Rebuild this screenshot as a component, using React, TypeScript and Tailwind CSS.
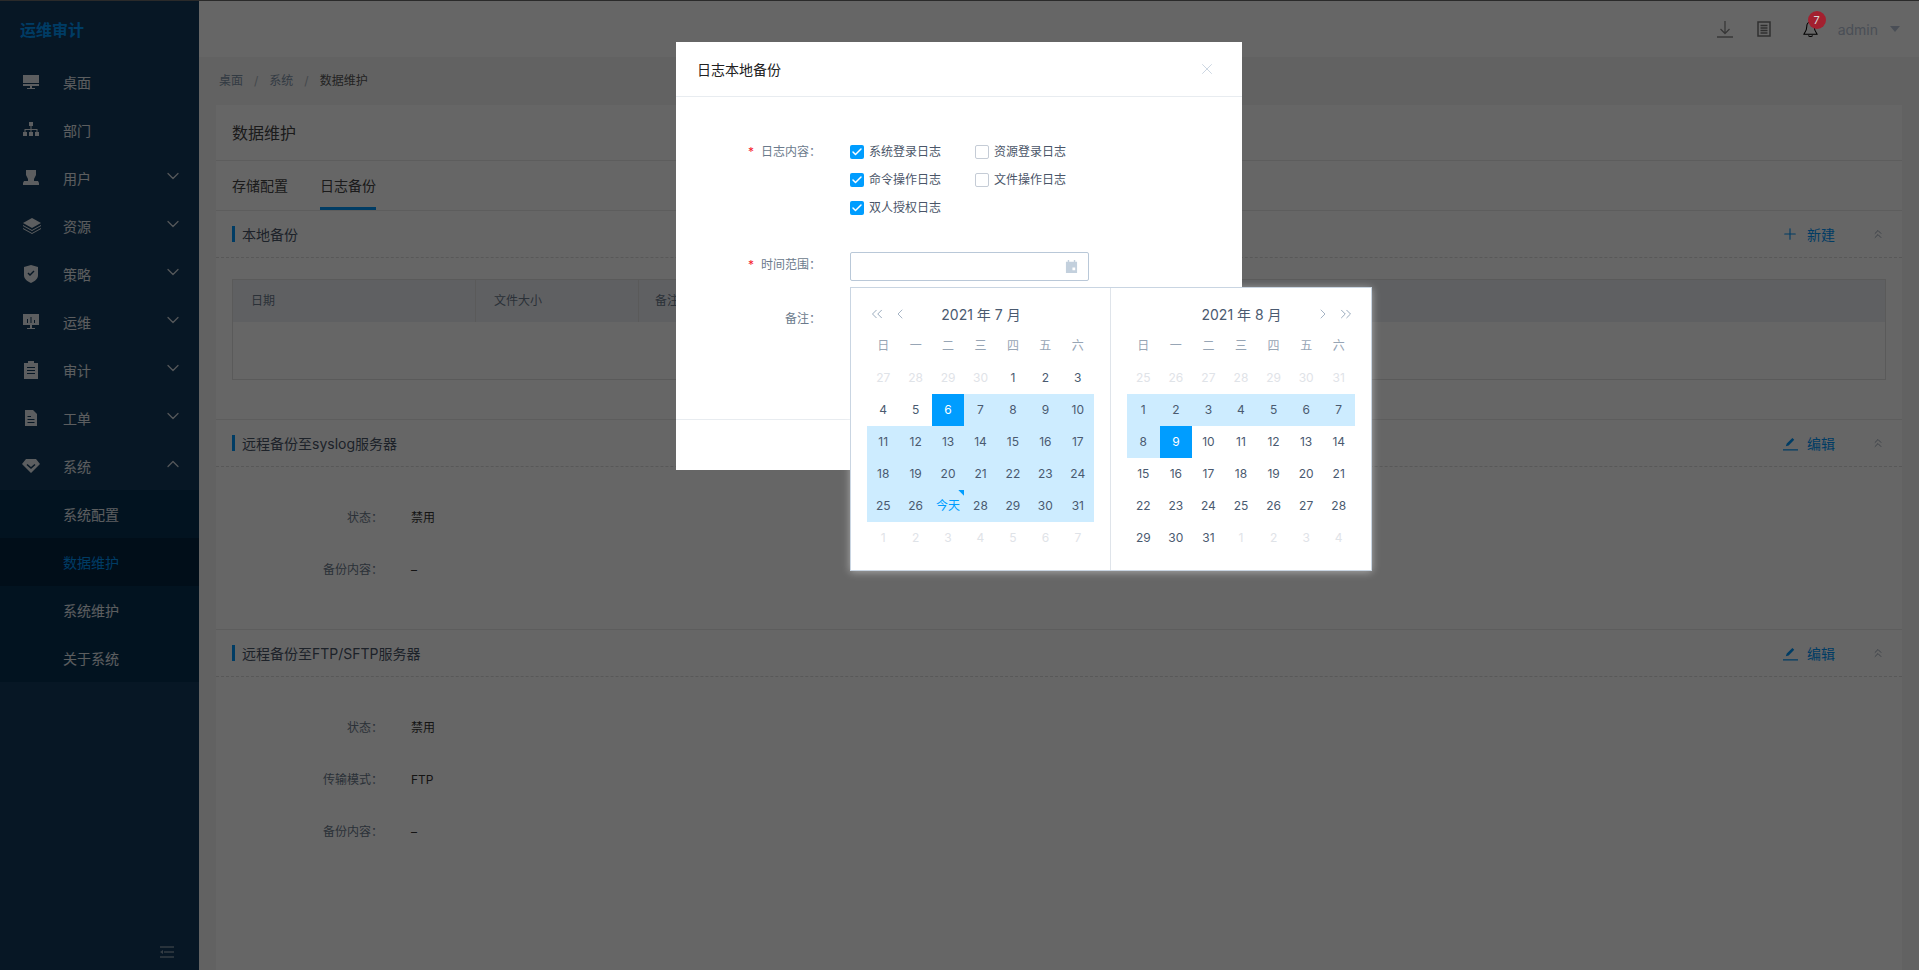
import React from "react";
import { ChevronDown, ChevronUp, ChevronLeft, ChevronRight, ChevronsLeft, ChevronsRight, ChevronsUp, Plus, X, Check } from "lucide-react";

const ICON = "w-[18px] h-[18px] fill-[#fff]/90";
const Desk = () => (<svg viewBox="0 0 18 18" className={ICON}><path d="M1 2h16v8H1zM1 11h16v2H1zM8 13h2v2H8zM5 15h8v1H5z" /></svg>);
const Org = () => (<svg viewBox="0 0 18 18" className={ICON}><path d="M7 1h4v4H7zM8.5 5h1v3h-1zM2.5 8h13v1h-13zM2.5 8h1v3h-1zM8.500 8h1v3h-1zM14.500 8h1v3h-1zM1 11h4v4H1zM7 11h4v4H7zM13 11h4v4h-4z" /></svg>);
const User = () => (<svg viewBox="0 0 18 18" className={ICON}><path d="M4 1h10v5l-2 4v2h4l1 2v2H1v-2l1-2h4v-2L4 6z" /></svg>);
const Layers = () => (<svg viewBox="0 0 20 18" className="w-5 h-[18px] fill-[#fff]/90"><path d="M10 1l9 5-9 5-9-5z" /><path d="M1 8l9 5 9-5v1l-9 5-9-5zM1 11l9 5 9-5v1l-9 5-9-5z" /></svg>);
const Shield = () => (<svg viewBox="0 0 18 18" className={ICON}><path fillRule="evenodd" d="M9 0l7 2v8c0 4-3 6-7 8-4-2-7-4-7-8V2zM5.500 8.500l1-1L8 9l3.500-3.500 1 1L8 11z" /></svg>);
const Ops = () => (<svg viewBox="0 0 18 18" className={ICON}><path fillRule="evenodd" d="M1 1h16v11H1zM5 6h1v4H5zM8.500 4h1v6h-1zM12 7h1v3h-1z" /><path d="M8 12h2v3H8zM5 15h8v1H5z" /></svg>);
const Clip = () => (<svg viewBox="0 0 18 18" className={ICON}><path fillRule="evenodd" d="M6 2V0h6v2h4v16H2V2zM5 6v1h8V6zM5 9v1h8V9zM5 12v1h8v-1z" /></svg>);
const Doc = () => (<svg viewBox="0 0 18 18" className={ICON}><path fillRule="evenodd" d="M3 1h8l4 4v12H3zM5.500 7v1H9V7zM5.500 10v1h7v-1zM5.500 13v1h7v-1z" /></svg>);
const Gem = () => (<svg viewBox="0 0 18 18" className={ICON}><path fillRule="evenodd" d="M4 2h10l4 5-9 9-9-9zM5.500 7l-1 1L9 12l4.500-4-1-1L9 10z" /></svg>);

function MenuItem({ icon, label, arrow }: { icon: React.ReactNode; label: string; arrow?: "down" | "up" }) {
  return (
    <div className="h-12 flex items-center relative">
      <div className="w-[63px] pl-[22px] flex items-center">{icon}</div>
      <span className="text-[14px] text-[#fff]/90 flex-1">{label}</span>
      {arrow === "down" && <ChevronDown className="w-5 h-5 text-[#fff]/80 mr-4 mb-1" strokeWidth={1.5} />}
      {arrow === "up" && <ChevronUp className="w-5 h-5 text-[#fff]/80 mr-4 mb-1" strokeWidth={1.5} />}
    </div>
  );
}

function Sidebar() {
  return (
    <aside className="w-[199px] shrink-0 bg-[#123a5c] flex flex-col">
      <div className="h-[57px] flex items-center pl-5 text-[16px] font-bold text-[#0096fa]">运维审计</div>
      <MenuItem icon={<Desk />} label="桌面" />
      <MenuItem icon={<Org />} label="部门" />
      <MenuItem icon={<User />} label="用户" arrow="down" />
      <MenuItem icon={<Layers />} label="资源" arrow="down" />
      <MenuItem icon={<Shield />} label="策略" arrow="down" />
      <MenuItem icon={<Ops />} label="运维" arrow="down" />
      <MenuItem icon={<Clip />} label="审计" arrow="down" />
      <MenuItem icon={<Doc />} label="工单" arrow="down" />
      <MenuItem icon={<Gem />} label="系统" arrow="up" />
      <div className="bg-[#053052]">
        <div className="h-12 flex items-center pl-[63px] text-[14px] text-[#fff]/90">系统配置</div>
        <div className="h-12 flex items-center pl-[63px] text-[14px] text-[#0096fa] bg-[#03233f]">数据维护</div>
        <div className="h-12 flex items-center pl-[63px] text-[14px] text-[#fff]/90">系统维护</div>
        <div className="h-12 flex items-center pl-[63px] text-[14px] text-[#fff]/90">关于系统</div>
      </div>
      <div className="mt-auto pb-[12px] pl-[160px]">
        <svg viewBox="0 0 14 12" className="w-[14px] h-3 stroke-[#fff]/70 fill-none"><path d="M0 1h14M4 6h10M0 11h14" /><path d="M0 6l3-2v4z" className="fill-[#fff]/50 stroke-none" /></svg>
      </div>
    </aside>
  );
}

function Section({ title, action, children, top }: { title: string; action: "new" | "edit"; children: React.ReactNode; top?: boolean }) {
  return (
    <section className={top ? "border-t border-[#e8e8e8]" : ""}>
      <div className="h-[47px] border-b border-dashed border-[#ddd] flex items-center pl-4 pr-[16px]">
        <span className="w-[3px] h-4 bg-[#0096fa] mr-[7px]" />
        <span className="text-[14px] text-[#4a5568] flex-1">{title}</span>
        {action === "new" ? (
          <Plus className="w-[18px] h-[18px] text-[#0096fa] mr-2" strokeWidth={1.5} />
        ) : (
          <svg viewBox="0 0 16 16" className="w-[15px] h-[15px] fill-[#0096fa] mr-[9px]"><path d="M0 14h16v1.500H0zM3 11l1-3 6-6 2 2-6 6z" /></svg>
        )}
        <span className="text-[14px] text-[#0096fa] w-[28px]">{action === "new" ? "新建" : "编辑"}</span>
        <ChevronsUp className="w-[14px] h-[14px] text-[#8c99aa] ml-[36px] mr-[1px]" strokeWidth={1.5} />
      </div>
      {children}
    </section>
  );
}

function Detail({ rows, pb }: { rows: [string, string][]; pb: string }) {
  return (
    <div className={"pt-[25px] " + pb}>
      {rows.map(([k, v]) => (
        <div key={k} className="h-[52px] flex items-center text-[12px]">
          <span className="w-[167px] text-right text-[#6b7a8c]">{k}</span>
          <span className="ml-[28px] text-[#333]">{v}</span>
        </div>
      ))}
    </div>
  );
}

function Page() {
  return (
    <main className="flex-1 min-w-0 bg-[#f5f5f5] flex flex-col">
      <header className="h-[56px] bg-white flex items-center shrink-0">
        <div className="flex-1" />
        <svg viewBox="0 0 16 18" className="w-4 h-[18px] stroke-[#8a8a8a] fill-none mr-[24px]" strokeWidth="1.300"><path d="M8 1v12M3.500 9L8 13.500 12.500 9M0 17h16" /></svg>
        <svg viewBox="0 0 14 16" className="w-[14px] h-4 stroke-[#777] fill-none mr-[32px]" strokeWidth="1.500"><path d="M1 1h12v14H1zM3.500 4.500h7M3.500 7h7M3.500 9.500h7M3.500 12h7" /></svg>
        <div className="relative mr-[20px]">
          <svg viewBox="0 0 16 18" className="w-[15px] h-[17px] stroke-black fill-none" strokeWidth="1.100"><path d="M8 1C5 1 4 3.500 4 6c0 4-2 6-3 8h14c-1-2-3-4-3-8 0-2.500-1-5-4-5zM6 15c0 2 4 2 4 0" /></svg>
          <span className="absolute z-20 -top-[10px] left-[5px] w-[18px] h-[18px] rounded-full bg-[#a3202f] text-[#d8d8d8] text-[11px] leading-[18px] text-center">7</span>
        </div>
        <span className="text-[14px] text-[#b8c4d6]">admin</span>
        <span className="w-0 h-0 ml-[12px] mr-[19px] border-x-[5px] border-x-transparent border-t-[6px] border-t-[#b8c4d6]" />
      </header>
      <nav className="h-[48px] shrink-0 flex items-center pl-[20px] text-[12px]">
        <span className="text-[#7f93a8]">桌面</span>
        <span className="mx-[11px] text-[#aab4c0]">/</span>
        <span className="text-[#7f93a8]">系统</span>
        <span className="mx-[11px] text-[#aab4c0]">/</span>
        <span className="text-[#555]">数据维护</span>
      </nav>
      <div className="ml-[17px] w-[1686px] flex-1 bg-white">
        <div className="h-[56px] border-b border-[#e8e8e8] flex items-center pl-4 text-[16px] text-[#444]">数据维护</div>
        <div className="h-[50px] border-b border-[#e8e8e8] flex pl-4 gap-8 text-[14px] text-[#444]">
          <div className="flex items-center">存储配置</div>
          <div className="flex items-center border-b-[3px] border-[#0096fa] pt-[3px]">日志备份</div>
        </div>
        <Section title="本地备份" action="new">
          <div className="pt-[21px] px-4 pb-[39px]">
            <div className="h-[101px] border border-[#e2e2e2] w-[1654px]">
              <div className="h-[42px] bg-[#eef0f6] flex items-center text-[12px] text-[#6b7a8c]">
                <div className="w-[243px] h-full flex items-center pl-[18px] border-r border-[#e2e2e2]">日期</div>
                <div className="w-[163px] h-full flex items-center pl-[18px] border-r border-[#e2e2e2]">文件大小</div>
                <div className="pl-[16px]">备注</div>
              </div>
            </div>
          </div>
        </Section>
        <Section title="远程备份至syslog服务器" action="edit" top>
          <Detail pb="pb-[33px]" rows={[["状态：", "禁用"], ["备份内容：", "–"]]} />
        </Section>
        <Section title="远程备份至FTP/SFTP服务器" action="edit" top>
          <Detail pb="pb-0" rows={[["状态：", "禁用"], ["传输模式：", "FTP"], ["备份内容：", "–"]]} />
        </Section>
      </div>
    </main>
  );
}

function Cb({ label, on }: { label: string; on?: boolean }) {
  return (
    <div className="flex items-center h-7 text-[12px] text-[#4a5568] w-[125px]">
      <span className={"w-[14px] h-[14px] rounded-[2px] flex items-center justify-center mr-[5px] " + (on ? "bg-[#009dff]" : "border border-[#c5ccd6] bg-white")}>
        {on && <Check className="w-3 h-3 text-white" strokeWidth={3} />}
      </span>
      {label}
    </div>
  );
}

type Cell = { t: string; k?: "muted" | "sel" | "range" | "today" };

function range(a: number, b: number, k?: Cell["k"]): Cell[] {
  const out: Cell[] = [];
  for (let i = a; i <= b; i++) out.push({ t: String(i), k });
  return out;
}

const JULY: Cell[] = [
  ...range(27, 30, "muted"),
  ...range(1, 5),
  { t: "6", k: "sel" },
  ...range(7, 26, "range"),
  { t: "今天", k: "today" },
  ...range(28, 31, "range"),
  ...range(1, 7, "muted"),
];
const AUG: Cell[] = [
  ...range(25, 31, "muted"),
  ...range(1, 8, "range"),
  { t: "9", k: "sel" },
  ...range(10, 31),
  ...range(1, 4, "muted"),
];

function Month({ title, cells, side }: { title: string; cells: Cell[]; side: "l" | "r" }) {
  return (
    <div className={side === "l" ? "w-[260px] pl-4 pr-4 border-r border-[#dfe4ea] pt-[10px] pb-4" : "w-[260px] pl-4 pr-4 pt-[10px] pb-4"}>
      <div className="h-8 flex items-center text-[#8fa1b6]">
        <div className="flex-1 flex items-center gap-[6px] pl-[1px]">
          {side === "l" && (<><ChevronsLeft className="w-[18px] h-[18px]" strokeWidth={1.2} /><ChevronLeft className="w-[16px] h-[18px]" strokeWidth={1.2} /></>)}
        </div>
        <span className="text-[14px] text-[#4a5a70]">{title}</span>
        <div className="flex-1 flex items-center justify-end gap-[6px]">
          {side === "r" && (<><ChevronRight className="w-[16px] h-[18px]" strokeWidth={1.2} /><ChevronsRight className="w-[18px] h-[18px]" strokeWidth={1.2} /></>)}
        </div>
      </div>
      <div className="grid grid-cols-7">
        {["日", "一", "二", "三", "四", "五", "六"].map((d) => (
          <div key={d} className="h-8 flex items-center justify-center text-[12px] text-[#97a5b5]">{d}</div>
        ))}
        {cells.map((c, i) => (
          <div
            key={i}
            className={
              "h-8 flex items-center justify-center text-[12px] relative " +
              (c.k === "muted" ? "text-[#dfe3e8]" : c.k === "sel" ? "bg-[#009dff] text-white" : c.k === "range" ? "bg-[#cdecff] text-[#4a5a70]" : c.k === "today" ? "bg-[#cdecff] text-[#009dff]" : "text-[#4a5a70]")
            }
          >
            {c.t}
            {c.k === "today" && <span className="absolute top-0 right-0 w-[6px] h-[6px] bg-[#009dff] [clip-path:polygon(0_0,100%_0,100%_100%)]" />}
          </div>
        ))}
      </div>
    </div>
  );
}

function Dialog() {
  return (
    <>
      <div className="absolute z-30 left-[676px] top-[42px] w-[566px] h-[428px] bg-white flex flex-col">
        <div className="h-[55px] border-b border-[#e8ecf0] flex items-center pl-[21px] pr-[26px]">
          <span className="text-[14px] text-[#222] flex-1">日志本地备份</span>
          <X className="w-[18px] h-[18px] text-[#c7d3df]" strokeWidth={1.2} />
        </div>
        <div className="pt-[41px] flex">
          <div className="w-[145px] flex justify-end text-[12px] text-[#6b7a8c] h-7 items-center">
            <span className="text-[#f5222d] mr-[7px]">*</span>日志内容：
          </div>
          <div className="ml-[29px] w-[260px] flex flex-wrap">
            <Cb label="系统登录日志" on />
            <Cb label="资源登录日志" />
            <Cb label="命令操作日志" on />
            <Cb label="文件操作日志" />
            <Cb label="双人授权日志" on />
          </div>
        </div>
        <div className="mt-[30px] flex items-center h-[29px]">
          <div className="w-[145px] flex justify-end text-[12px] text-[#6b7a8c] items-center mb-[3px]">
            <span className="text-[#f5222d] mr-[7px]">*</span>时间范围：
          </div>
          <div className="ml-[29px] w-[239px] h-[29px] border border-[#b9c8d8] rounded-[2px] flex items-center justify-end pr-[10px]">
            <svg viewBox="0 0 14 14" className="w-[13px] h-[13px]"><path fillRule="evenodd" className="fill-[#c3d0dd]" d="M3 0h1.500v2h5V0H11v2h2v12H1V2h2zM8 8v3h3V8z" /></svg>
          </div>
        </div>
        <div className="mt-[29px] w-[145px] flex justify-end text-[12px] text-[#6b7a8c]">备注：</div>
        <div className="mt-auto h-[51px] border-t border-[#e8ecf0]" />
      </div>
      <div className="absolute z-40 left-[850px] top-[287px] flex bg-white border border-[#c9d5e2] shadow-[0_1px_8px_rgba(255,255,255,0.45)]">
        <Month title="2021 年 7 月" cells={JULY} side="l" />
        <Month title="2021 年 8 月" cells={AUG} side="r" />
      </div>
    </>
  );
}

export default function App() {
  return (
    <div className="relative w-[1919px] h-[970px] overflow-hidden font-['Inter','Noto_Sans_CJK_SC',sans-serif]">
      <div className="h-full flex border-t border-[#6a6a6a]">
        <Sidebar />
        <Page />
      </div>
      <div className="absolute inset-0 z-10 bg-black/60" />
      <Dialog />
    </div>
  );
}
